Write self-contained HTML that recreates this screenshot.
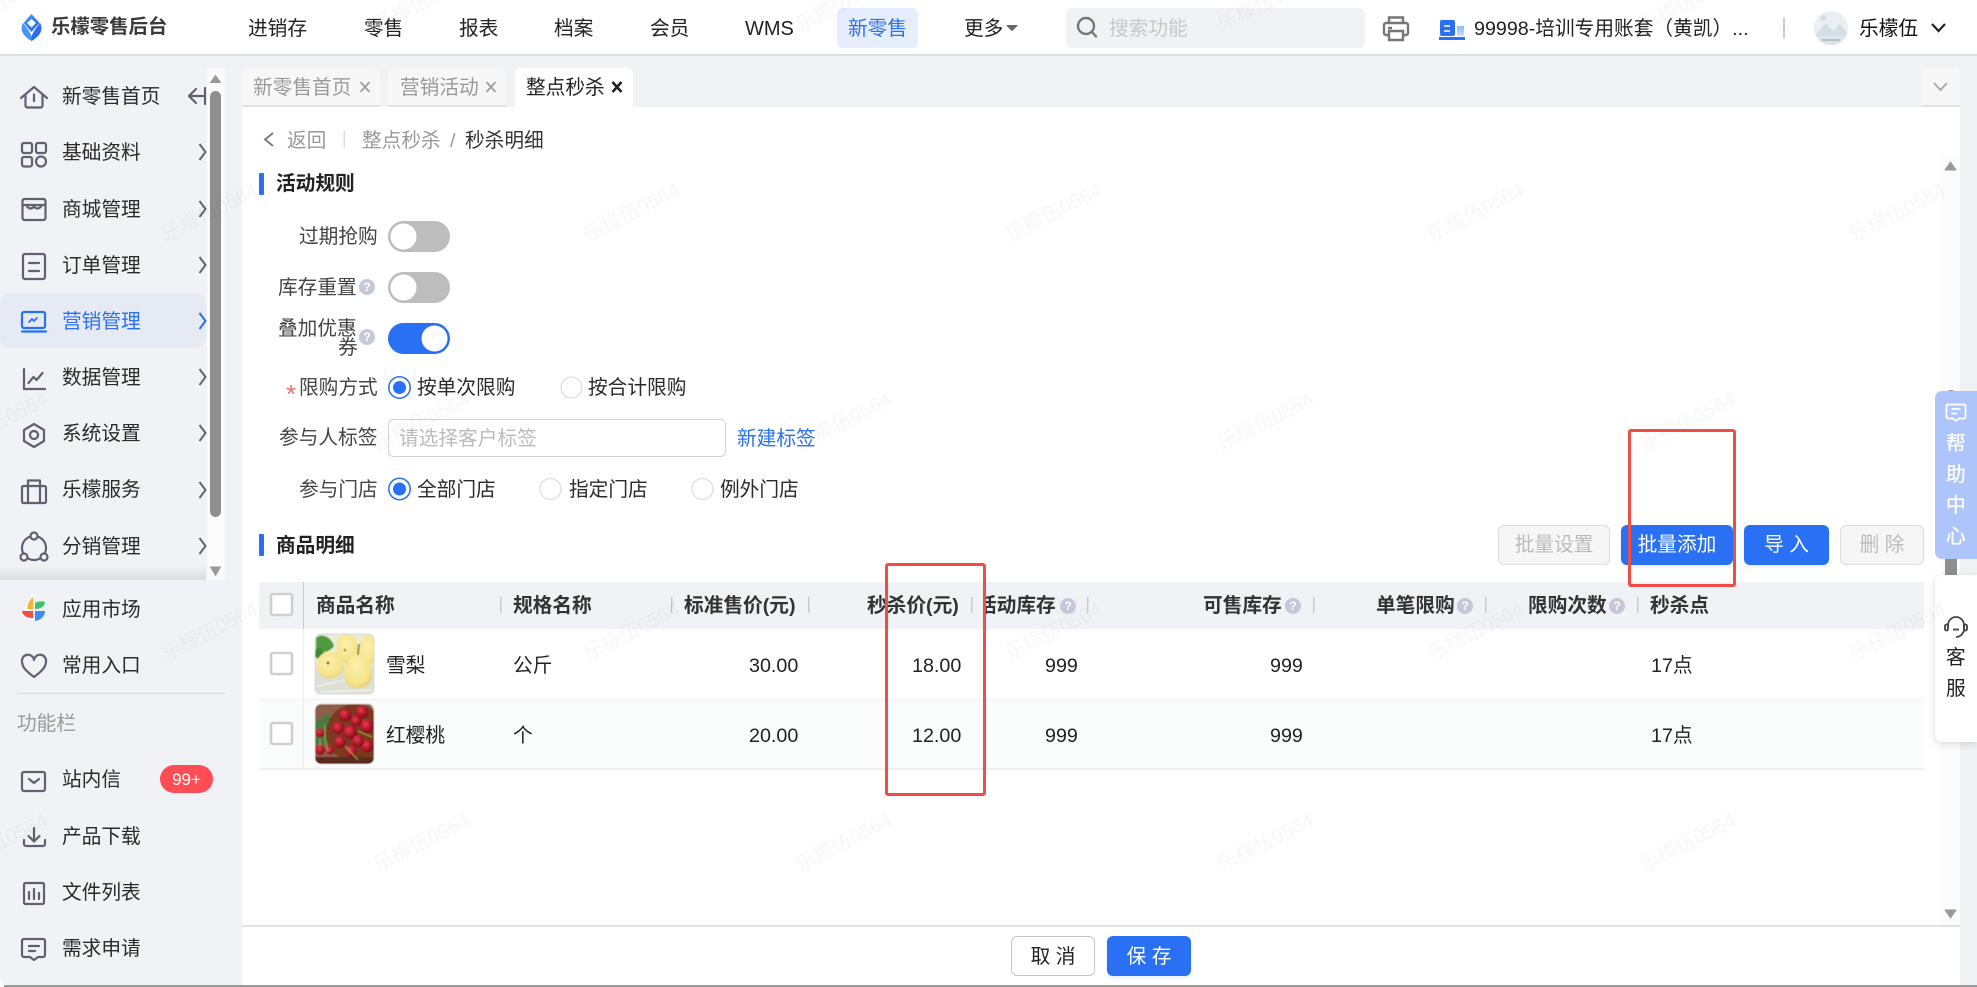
<!DOCTYPE html>
<html lang="zh-CN"><head><meta charset="utf-8"><title>整点秒杀</title>
<style>
html,body{margin:0;padding:0;background:#fff}
body{width:1977px;height:987px;overflow:hidden;position:relative;font-family:"Liberation Sans","Noto Sans CJK SC",sans-serif;font-size:19.7px;color:#222}
.b{position:absolute}
.t{position:absolute;white-space:nowrap;line-height:30px;transform:translateY(calc(-50% + 1px));margin-left:1px}
.g{color:#999}.s{color:#444}.h{font-weight:700;color:#333}.m{color:#2a2a2a}
.w{position:absolute;white-space:nowrap;font-size:20px;line-height:24px;color:rgba(0,0,0,.035);transform:translate(-50%,-50%) rotate(-27deg);pointer-events:none;z-index:50}
.btn{position:absolute;box-sizing:border-box;height:40px;top:525px;border-radius:6px;text-align:center;line-height:39px;white-space:nowrap}
.pri{background:#2970f4;color:#fff;box-shadow:0 2px 3px rgba(41,112,244,.12)}
.dis{background:#f6f6f6;border:1px solid #ddd;color:#bbb}
.tab{position:absolute;top:68px;height:39px;box-sizing:border-box;background:#f7f7f7;border-bottom:2px solid #e2e2e2;border-radius:6px 6px 0 0}
</style></head><body>
<!-- backgrounds -->
<div class="b" style="left:0;top:0;width:1977px;height:54px;background:#fff"></div>
<div class="b" style="left:0;top:54px;width:1977px;height:2px;background:#dedede"></div>
<div class="b" style="left:0;top:56px;width:1977px;height:51px;background:#f1f2f4"></div>
<div class="b" style="left:0;top:56px;width:242px;height:929px;background:#f1f2f5;border-bottom-left-radius:8px"></div>
<div class="b" style="left:1960px;top:56px;width:17px;height:929px;background:#f1f2f4"></div>
<div class="b" style="left:207px;top:68px;width:18px;height:512px;background:#fbfbfb"></div>
<div class="b" style="left:0;top:293px;width:206px;height:55px;background:#e6eaf5;border-radius:10px"></div>
<div class="b" style="left:0;top:566px;width:206px;height:14px;background:linear-gradient(to bottom,rgba(210,210,210,0),#dcdcdc)"></div>
<div class="b" style="left:837px;top:8px;width:81px;height:40px;background:#e6edfd;border-radius:6px"></div>
<div class="b" style="left:1066px;top:8px;width:299px;height:40px;background:#f1f2f4;border-radius:6px"></div>
<div class="tab" style="left:242px;width:138px"></div>
<div class="tab" style="left:388px;width:118px"></div>
<div class="b" style="left:515px;top:68px;width:118px;height:39px;background:#fff;border-radius:6px 6px 0 0"></div>
<div class="tab" style="left:1921px;width:39px"></div>
<div class="b" style="left:1941px;top:155px;width:19px;height:770px;background:#fbfbfb"></div>
<div class="b" style="left:242px;top:925px;width:1718px;height:2px;background:#e2e2e2"></div>
<div class="b" style="left:4px;top:985px;width:1973px;height:2px;background:#9a9a9a"></div>
<!-- table bg -->
<div class="b" style="left:259px;top:582px;width:1665px;height:47px;background:#f1f2f5"></div>
<div class="b" style="left:259px;top:699px;width:1665px;height:71px;background:#fafbfb;border-top:1px solid #f1f2f2;border-bottom:2px solid #eeeeee;box-sizing:border-box"></div>
<div class="b" style="left:303px;top:582px;width:1px;height:47px;background:#c8cbd2"></div>
<div class="b" style="left:303px;top:629px;width:1px;height:140px;background:#eeeeee"></div>

<svg class="b" style="left:0;top:0" width="1977" height="987" viewBox="0 0 1977 987" fill="none">
<defs>
<clipPath id="c1"><rect x="315" y="634" width="59" height="60" rx="6"/></clipPath>
<clipPath id="c2"><rect x="315" y="704" width="59" height="60" rx="6"/></clipPath>
<clipPath id="c3"><circle cx="1831" cy="28" r="17"/></clipPath>
<filter id="bl" x="-10%" y="-10%" width="120%" height="120%"><feGaussianBlur stdDeviation=".6"/></filter>
<linearGradient id="lg" x1="0" y1="0" x2="0" y2="1"><stop offset="0" stop-color="#8fb6fb"/><stop offset="1" stop-color="#cfe0fd"/></linearGradient>
<linearGradient id="lb" x1="0" y1="0" x2="1" y2="1"><stop offset="0" stop-color="#3fa0fb"/><stop offset="1" stop-color="#2563ee"/></linearGradient>
<radialGradient id="pr" cx=".45" cy=".4" r=".7"><stop offset="0" stop-color="#fbf1ad"/><stop offset=".7" stop-color="#f6e389"/><stop offset="1" stop-color="#dcc562"/></radialGradient>
<radialGradient id="ch" cx=".4" cy=".35" r=".7"><stop offset="0" stop-color="#e2404f"/><stop offset=".55" stop-color="#b3162a"/><stop offset="1" stop-color="#6e0c18"/></radialGradient>
</defs>
<!-- logo -->
<path d="M31.500 14 L39.500 23 L31.500 32 L23.500 23 Z" fill="url(#lb)"/>
<path d="M31.500 19 L36 23 L31.500 27.500 L27 23 Z" fill="#fff"/>
<path d="M23 23 C20 28 21 35 31.500 41 C33 36 30 32 23 23 Z" fill="#4a96f8"/>
<path d="M40 23 C43 28 42 35 31.500 41 C30.500 36 33 32 40 23 Z" fill="#2a6df2"/>
<!-- top right icons -->
<g stroke="#777" stroke-width="2.400"><circle cx="1086" cy="26" r="8"/><path d="M1092 32l4 4.500" stroke-linecap="round"/>
<path d="M1389 23V17.500H1403V23M1389 35H1386a2 2 0 0 1-2-2V25a2 2 0 0 1 2-2H1406a2 2 0 0 1 2 2V33a2 2 0 0 1-2 2H1403M1389 31H1403V40H1389ZM1388 28h4"/></g>
<rect x="1440" y="20" width="15" height="16" rx="2" fill="#2970f4"/><rect x="1457" y="26" width="7" height="10" fill="url(#lg)"/><rect x="1439" y="37" width="26" height="3" fill="#2970f4"/>
<path d="M1444 26h6M1444 31h6" stroke="#fff" stroke-width="1.600"/>
<rect x="1783" y="18" width="2" height="20" fill="#c8c8c8"/>
<g clip-path="url(#c3)"><rect x="1814" y="11" width="34" height="34" fill="#e9eff2"/><circle cx="1823" cy="18" r="3" fill="#d5dee3"/><path d="M1814 36L1826 23L1833 31L1840 24L1848 34V45H1814Z" fill="#d4dfe5"/><rect x="1814" y="36" width="34" height="9" fill="#dbe4e9"/><path d="M1822 40h18" stroke="#a9b4ba" stroke-width="1.500"/></g>
<path d="M1932 24L1938.500 31L1945 24" stroke="#222" stroke-width="2.200"/>
<path d="M1007 25.500H1017L1012 30.500Z" fill="#666" stroke="#666" stroke-linejoin="round"/>
<path d="M1934 83L1940.500 90L1947 83" stroke="#aaa" stroke-width="2"/>
<!-- tab close -->
<path d="M360.500 82L369.500 92M369.500 82L360.500 92M486.500 82L495.500 92M495.500 82L486.500 92" stroke="#a3a3a3" stroke-width="2"/>
<path d="M612.500 82L621.500 92M621.500 82L612.500 92" stroke="#222" stroke-width="2.600"/>
<!-- sidebar icons -->
<g stroke="#5d6172" stroke-width="2.200" stroke-linecap="round" stroke-linejoin="round">
<path d="M21 98L34 87L47 98M25.500 95V105.500a2 2 0 0 0 2 2H40.500a2 2 0 0 0 2-2V95M34 94.500V101"/>
<rect x="22" y="143" width="10" height="10" rx="2"/><rect x="36" y="143" width="10" height="10" rx="2"/><rect x="22" y="157" width="10" height="9.500" rx="2"/><circle cx="41" cy="161.500" r="5"/>
<rect x="22.500" y="199" width="23" height="21" rx="2"/><path d="M23 205H45M27 206.500q3.500 4 7 0q3.500 4 7 0"/>
<rect x="23" y="254" width="22" height="25" rx="2"/><path d="M29 263H39M29 271H39"/>
<path d="M24 369V389H45M28.500 383l5-6l3 3l6-7"/>
<path d="M34 424L44 430V441L34 447L24 441V430ZM34 431a4 4 0 1 0 .01 0Z"/>
<rect x="22" y="486" width="24" height="17" rx="1.500"/><path d="M28 486V480.500H40V486M28 486V503M40 486V503"/>
<circle cx="34" cy="548" r="12"/><circle cx="34" cy="536" r="3.500" fill="#f1f2f5"/><circle cx="24" cy="557" r="3.500" fill="#f1f2f5"/><circle cx="44" cy="557" r="3.500" fill="#f1f2f5"/>
<path d="M34 677C26 671 22 667 22 661.500a6 6 0 0 1 12-1.500a6 6 0 0 1 12 1.500C46 667 42 671 34 677Z"/>
<rect x="22" y="772" width="23" height="19" rx="2"/><path d="M29 779l5 4l5-4"/>
<path d="M34 828V841M28.500 836l5.500 5.500l5.500-5.500M24 840v4a2 2 0 0 0 2 2H43a2 2 0 0 0 2-2v-4"/>
<rect x="24" y="883" width="20" height="21" rx="1.500"/><path d="M29 892v7M34 889v10M39 893v6"/>
<path d="M24 939H43a2 2 0 0 1 2 2V955a2 2 0 0 1-2 2H38L34 960L30 957H24a2 2 0 0 1-2-2V941a2 2 0 0 1 2-2ZM29 946H39M29 951H35"/>
<path d="M196 89L189 96L196 103M189 96H203M205 88V104"/>
</g>
<g stroke="#2970f4" stroke-width="2.200" stroke-linecap="round" stroke-linejoin="round"><rect x="22" y="312" width="23" height="16" rx="2"/><path d="M22 331.500H46"/><path d="M29 322l3-3l2 2l3-3" stroke-width="1.800"/></g>
<path d="M33 597C29 601 27.500 604 27.500 609H33Z" fill="#f9b233"/><path d="M35 603C38 601 42 601 45 602C45 606 41 609 35 609Z" fill="#3fc06a"/><path d="M22 611H33V618C27 618 23 616 22 611Z" fill="#ee4f45"/><path d="M35 611H45C45 616 41 620 35 621Z" fill="#3d8bf5"/>
<!-- sidebar chevrons -->
<g stroke="#666" stroke-width="2"><path d="M199.500 144L205.500 152L199.500 160M199.500 201L205.500 209L199.500 217M199.500 257L205.500 265L199.500 273M199.500 369L205.500 377L199.500 385M199.500 425L205.500 433L199.500 441M199.500 482L205.500 490L199.500 498M199.500 538L205.500 546L199.500 554"/></g>
<path d="M199.500 313L205.500 321L199.500 329" stroke="#2970f4" stroke-width="2"/>
<!-- scrollbars -->
<rect x="210" y="91" width="11" height="426" rx="5.500" fill="#8f8f8f"/>
<path d="M215.500 75.500L220.500 82.500H210.500Z" fill="#999" stroke="#999" stroke-linejoin="round"/>
<path d="M215.500 575.500L220.500 567H210.500Z" fill="#999" stroke="#999" stroke-linejoin="round"/>
<rect x="1945" y="390" width="12" height="310" rx="6" fill="#8f8f8f"/>
<path d="M1950.500 162L1956 170H1945Z" fill="#999" stroke="#999" stroke-linejoin="round"/>
<path d="M1950.500 918L1956 910H1945Z" fill="#999" stroke="#999" stroke-linejoin="round"/>
<!-- section bars & breadcrumb -->
<rect x="259" y="173" width="5" height="22" rx="1" fill="#2970f4"/><rect x="259" y="534" width="5" height="22" rx="1" fill="#2970f4"/>
<path d="M273 133L265 139.500L273 146" stroke="#777" stroke-width="1.800"/><rect x="343.500" y="131" width="1.500" height="17" fill="#ddd"/>
<!-- toggles -->
<rect x="388" y="221" width="62" height="31" rx="15.500" fill="#bdbdbd"/><circle cx="403.500" cy="236.500" r="13" fill="#fff"/>
<rect x="388" y="272" width="62" height="31" rx="15.500" fill="#bdbdbd"/><circle cx="403.500" cy="287.500" r="13" fill="#fff"/>
<rect x="388" y="323" width="62" height="31" rx="15.500" fill="#2970f4"/><circle cx="434.500" cy="338.500" r="13" fill="#fff"/>
<!-- radios -->
<g stroke="#2970f4" stroke-width="1.500"><circle cx="399.500" cy="387.500" r="10.700" fill="#fff"/><circle cx="399.500" cy="489" r="10.700" fill="#fff"/></g>
<circle cx="399.500" cy="387.500" r="6.500" fill="#2970f4"/><circle cx="399.500" cy="489" r="6.500" fill="#2970f4"/>
<g stroke="#ddd" stroke-width="1.300" fill="#fff"><circle cx="571.500" cy="387.500" r="10.500"/><circle cx="550.500" cy="489" r="10.500"/><circle cx="702.500" cy="489" r="10.500"/></g>
<!-- input -->
<rect x="388.500" y="419.500" width="337" height="37" rx="5" fill="#fff" stroke="#d2d2d2"/>
<!-- checkboxes -->
<g fill="#fff" stroke="#cfcfcf" stroke-width="2.600"><rect x="271" y="594" width="21" height="21" rx="2"/><rect x="271" y="653" width="21" height="21" rx="2"/><rect x="271" y="723" width="21" height="21" rx="2"/></g>
<!-- header seps -->
<g fill="#c6cad3"><rect x="500" y="597" width="1.500" height="16"/><rect x="671" y="597" width="1.500" height="16"/><rect x="808" y="597" width="1.500" height="16"/><rect x="971" y="597" width="1.500" height="16"/><rect x="1087" y="597" width="1.500" height="16"/><rect x="1313" y="597" width="1.500" height="16"/><rect x="1485" y="597" width="1.500" height="16"/><rect x="1637" y="597" width="1.500" height="16"/></g>
<!-- help icons -->
<g fill="#c4c8d8"><circle cx="367" cy="287" r="8"/><circle cx="367" cy="337" r="8"/><circle cx="1068" cy="606" r="8"/><circle cx="1293" cy="606" r="8"/><circle cx="1465" cy="606" r="8"/><circle cx="1617" cy="606" r="8"/></g>
<g fill="#fff" font-size="12" font-weight="700" text-anchor="middle" font-family="Liberation Sans"><text x="367" y="291">?</text><text x="367" y="341">?</text><text x="1068" y="610">?</text><text x="1293" y="610">?</text><text x="1465" y="610">?</text><text x="1617" y="610">?</text></g>
<!-- pear -->
<g clip-path="url(#c1)"><g filter="url(#bl)"><rect x="315" y="634" width="60" height="60" fill="#dcdfd3"/><rect x="315" y="634" width="60" height="32" fill="#e8ecd8"/>
<path d="M316 638C322 632 332 638 334 646C330 652 322 654 316 650Z" fill="#4f9a3c"/><path d="M315 650l5-3l4 6l-5 6l-4-2Z" fill="#3c8a34"/>
<ellipse cx="368" cy="650" rx="9" ry="15" fill="url(#pr)"/><ellipse cx="347" cy="648" rx="10.500" ry="15" fill="url(#pr)"/><ellipse cx="330" cy="665" rx="13.500" ry="13.500" fill="url(#pr)"/>
<path d="M358 652C348 656 344 668 344 674C344 684 350 688 357 688C365 688 372 684 372 674C372 666 368 656 358 652Z" fill="url(#pr)"/>
<path d="M359 644L358 655" stroke="#5a4a24" stroke-width="1.300"/><circle cx="328" cy="663" r="1.500" fill="#8a5a1c"/><circle cx="345" cy="650" r="1.200" fill="#8a5a1c"/>
<path d="M317 686L345 680M320 692L372 690" stroke="#f1f2ec" stroke-width="1.500"/></g></g>
<rect x="315" y="634" width="59" height="60" rx="6" stroke="#d8d8d8"/>
<!-- cherries -->
<g clip-path="url(#c2)"><g filter="url(#bl)"><rect x="315" y="704" width="60" height="60" fill="#8d5f4b"/><path d="M315 722L330 712V744H315Z" fill="#4c7a3f"/><path d="M370 704H376V716Z" fill="#d69a4e"/><circle cx="355" cy="733" r="29" fill="#7a3a1e"/><rect x="315" y="757" width="60" height="8" fill="#5a2a1c"/>
<circle cx="345" cy="715" r="6.500" fill="url(#ch)"/><circle cx="362" cy="712" r="6.500" fill="url(#ch)"/><circle cx="367" cy="726" r="7" fill="url(#ch)"/><circle cx="338" cy="728" r="6" fill="url(#ch)"/><circle cx="350" cy="732" r="7" fill="url(#ch)"/><circle cx="356" cy="721" r="5.500" fill="url(#ch)"/><circle cx="340" cy="742" r="6" fill="url(#ch)"/><circle cx="367" cy="746" r="6.500" fill="url(#ch)"/><circle cx="351" cy="751" r="6" fill="url(#ch)"/><circle cx="358" cy="741" r="6" fill="url(#ch)"/><circle cx="330" cy="750" r="4.500" fill="url(#ch)"/><circle cx="320" cy="750" r="5" fill="url(#ch)"/><circle cx="320" cy="733" r="4.500" fill="url(#ch)"/>
<path d="M325 725Q324 740 328 752M345 746L358 760M358 731L372 737M320 738V746" stroke="#8fa652" stroke-width="1"/></g></g>
<rect x="315" y="704" width="59" height="60" rx="6" stroke="#d8d8d8"/>
</svg>

<!-- top nav text -->
<span class="t" style="left:50px;top:26px;font-weight:700;color:#3a3a3a;font-size:19.400px">乐檬零售后台</span>
<span class="t" style="left:247px;top:28px">进销存</span>
<span class="t" style="left:363px;top:28px">零售</span>
<span class="t" style="left:458px;top:28px">报表</span>
<span class="t" style="left:553px;top:28px">档案</span>
<span class="t" style="left:649px;top:28px">会员</span>
<span class="t" style="left:744px;top:28px;font-size:20px">WMS</span>
<span class="t" style="left:847px;top:28px;color:#2970f4">新零售</span>
<span class="t" style="left:963px;top:28px">更多</span>
<span class="t" style="left:1108px;top:28px;color:#c8c8c8">搜索功能</span>
<span class="t" style="left:1473px;top:28px">99998-培训专用账套（黄凯）...</span>
<span class="t" style="left:1858px;top:28px;color:#111">乐檬伍</span>
<!-- tabs -->
<span class="t g" style="left:252px;top:87px">新零售首页</span>
<span class="t g" style="left:399px;top:87px">营销活动</span>
<span class="t" style="left:525px;top:87px">整点秒杀</span>
<!-- breadcrumb -->
<span class="t g" style="left:286px;top:140px">返回</span>
<span class="t g" style="left:361px;top:140px">整点秒杀</span>
<span class="t g" style="left:449px;top:140px">/</span>
<span class="t" style="left:464px;top:140px;color:#333">秒杀明细</span>
<!-- sidebar text -->
<span class="t m" style="left:61px;top:96px">新零售首页</span>
<span class="t m" style="left:61px;top:152px">基础资料</span>
<span class="t m" style="left:61px;top:209px">商城管理</span>
<span class="t m" style="left:61px;top:265px">订单管理</span>
<span class="t" style="left:61px;top:321px;color:#2970f4">营销管理</span>
<span class="t m" style="left:61px;top:377px">数据管理</span>
<span class="t m" style="left:61px;top:433px">系统设置</span>
<span class="t m" style="left:61px;top:489px">乐檬服务</span>
<span class="t m" style="left:61px;top:546px">分销管理</span>
<span class="t m" style="left:61px;top:609px">应用市场</span>
<span class="t m" style="left:61px;top:665px">常用入口</span>
<div class="b" style="left:17px;top:693px;width:208px;height:1px;background:#d8d9dc"></div>
<span class="t g" style="left:16px;top:723px">功能栏</span>
<span class="t m" style="left:61px;top:779px">站内信</span>
<div class="b" style="left:160px;top:765px;width:53px;height:28px;border-radius:14px;background:#ff4d55;color:#fff;font-size:17px;line-height:29px;text-align:center">99+</div>
<span class="t m" style="left:61px;top:836px">产品下载</span>
<span class="t m" style="left:61px;top:892px">文件列表</span>
<span class="t m" style="left:61px;top:948px">需求申请</span>
<!-- section + form -->
<span class="t h" style="left:275px;top:183px;color:#222">活动规则</span>
<span class="t s" style="left:298px;top:236px">过期抢购</span>
<span class="t s" style="left:277px;top:287px">库存重置</span>
<span class="t s" style="left:277px;top:328px">叠加优惠</span>
<span class="t s" style="left:337px;top:347px">券</span>
<span class="t" style="left:285px;top:393px;color:#f56c6c;font-size:26px">*</span>
<span class="t s" style="left:298px;top:387px">限购方式</span>
<span class="t m" style="left:416px;top:387px">按单次限购</span>
<span class="t m" style="left:587px;top:387px">按合计限购</span>
<span class="t s" style="left:278px;top:437px">参与人标签</span>
<span class="t" style="left:398px;top:438px;color:#bbb">请选择客户标签</span>
<span class="t" style="left:736px;top:438px;color:#2970f4">新建标签</span>
<span class="t s" style="left:298px;top:489px">参与门店</span>
<span class="t m" style="left:416px;top:489px">全部门店</span>
<span class="t m" style="left:568px;top:489px">指定门店</span>
<span class="t m" style="left:719px;top:489px">例外门店</span>
<span class="t h" style="left:275px;top:545px;color:#222">商品明细</span>
<!-- buttons -->
<div class="btn dis" style="left:1498px;width:112px">批量设置</div>
<div class="btn pri" style="left:1621px;width:112px;line-height:41px">批量添加</div>
<div class="btn pri" style="left:1744px;width:85px;line-height:41px">导 入</div>
<div class="btn dis" style="left:1840px;width:84px">删 除</div>
<!-- table header -->
<span class="t h" style="left:315px;top:605px">商品名称</span>
<span class="t h" style="left:512px;top:605px">规格名称</span>
<span class="t h" style="left:683px;top:605px">标准售价(元)</span>
<span class="t h" style="left:866px;top:605px">秒杀价(元)</span>
<div class="b" style="left:983px;top:590px;width:74px;height:30px;overflow:hidden"><span class="t h" style="left:-7px;top:15px">活动库存</span></div>
<span class="t h" style="left:1202px;top:605px">可售库存</span>
<span class="t h" style="left:1375px;top:605px">单笔限购</span>
<span class="t h" style="left:1527px;top:605px">限购次数</span>
<span class="t h" style="left:1649px;top:605px">秒杀点</span>
<!-- rows -->
<span class="t" style="left:385px;top:665px">雪梨</span><span class="t" style="left:512px;top:665px">公斤</span><span class="t" style="left:748px;top:665px">30.00</span><span class="t" style="left:911px;top:665px">18.00</span><span class="t" style="left:1044px;top:665px">999</span><span class="t" style="left:1269px;top:665px">999</span><span class="t" style="left:1650px;top:665px">17点</span>
<span class="t" style="left:385px;top:735px">红樱桃</span><span class="t" style="left:512px;top:735px">个</span><span class="t" style="left:748px;top:735px">20.00</span><span class="t" style="left:911px;top:735px">12.00</span><span class="t" style="left:1044px;top:735px">999</span><span class="t" style="left:1269px;top:735px">999</span><span class="t" style="left:1650px;top:735px">17点</span>
<!-- footer buttons -->
<div class="b" style="left:1011px;top:936px;width:84px;height:40px;box-sizing:border-box;border:1px solid #c4c4c4;border-radius:6px;background:#fff;text-align:center;line-height:40px;color:#222">取 消</div>
<div class="b" style="left:1107px;top:936px;width:84px;height:40px;border-radius:6px;background:#2970f4;color:#fff;text-align:center;line-height:42px;box-shadow:0 2px 3px rgba(41,112,244,.12)">保 存</div>
<!-- red boxes -->
<div class="b" style="left:885px;top:563px;width:101px;height:233px;box-sizing:border-box;border:3px solid #f04e44;border-radius:3px;z-index:40"></div>
<div class="b" style="left:1628px;top:429px;width:108px;height:158px;box-sizing:border-box;border:3px solid #f04e44;border-radius:3px;z-index:40"></div>
<!-- right floats -->
<div class="b" style="left:1935px;top:391px;width:42px;height:168px;background:#aec5fb;border-radius:7px 0 0 7px;z-index:30;color:#fff;text-align:center;-webkit-text-stroke:.3px #fff">
<svg class="b" style="left:10px;top:12px" width="22" height="20" viewBox="0 0 22 20" fill="none" stroke="#fff" stroke-width="1.800" stroke-linejoin="round"><path d="M3 1.500H19a1.500 1.500 0 0 1 1.500 1.500V14a1.500 1.500 0 0 1-1.500 1.500H14L11 18L8 15.500H3A1.500 1.500 0 0 1 1.500 14V3A1.500 1.500 0 0 1 3 1.500ZM6.500 6H15.500M6.500 10.500H12"/></svg>
<span class="t" style="left:10px;top:52px">帮</span><span class="t" style="left:10px;top:83px">助</span><span class="t" style="left:10px;top:114px">中</span><span class="t" style="left:10px;top:145px">心</span></div>
<div class="b" style="left:1935px;top:575px;width:42px;height:167px;background:#fff;border-radius:7px 0 0 7px;box-shadow:0 2px 8px rgba(0,0,0,.14);z-index:30">
<svg class="b" style="left:9px;top:40px" width="24" height="24" viewBox="0 0 24 24" fill="none" stroke="#444" stroke-width="1.800"><path d="M4 12V10a8 8 0 0 1 16 0V14a8 8 0 0 1-8 8"/><rect x="1" y="9.500" width="3" height="6" rx="1.500"/><rect x="20" y="9.500" width="3" height="6" rx="1.500"/><path d="M9 14.500h6"/></svg>
<span class="t" style="left:10px;top:82px">客</span><span class="t" style="left:10px;top:113px">服</span></div>
<!-- watermarks -->
<div class="w" style="left:0;top:3px">乐檬伍0564</div><div class="w" style="left:422px;top:3px">乐檬伍0564</div><div class="w" style="left:844px;top:3px">乐檬伍0564</div><div class="w" style="left:1266px;top:3px">乐檬伍0564</div><div class="w" style="left:1688px;top:3px">乐檬伍0564</div>
<div class="w" style="left:210px;top:213px">乐檬伍0564</div><div class="w" style="left:632px;top:213px">乐檬伍0564</div><div class="w" style="left:1054px;top:213px">乐檬伍0564</div><div class="w" style="left:1476px;top:213px">乐檬伍0564</div><div class="w" style="left:1898px;top:213px">乐檬伍0564</div>
<div class="w" style="left:0;top:422px">乐檬伍0564</div><div class="w" style="left:422px;top:422px">乐檬伍0564</div><div class="w" style="left:844px;top:422px">乐檬伍0564</div><div class="w" style="left:1266px;top:422px">乐檬伍0564</div><div class="w" style="left:1688px;top:422px">乐檬伍0564</div>
<div class="w" style="left:210px;top:632px">乐檬伍0564</div><div class="w" style="left:632px;top:632px">乐檬伍0564</div><div class="w" style="left:1054px;top:632px">乐檬伍0564</div><div class="w" style="left:1476px;top:632px">乐檬伍0564</div><div class="w" style="left:1898px;top:632px">乐檬伍0564</div>
<div class="w" style="left:0;top:843px">乐檬伍0564</div><div class="w" style="left:422px;top:843px">乐檬伍0564</div><div class="w" style="left:844px;top:843px">乐檬伍0564</div><div class="w" style="left:1266px;top:843px">乐檬伍0564</div><div class="w" style="left:1688px;top:843px">乐檬伍0564</div>
</body></html>
